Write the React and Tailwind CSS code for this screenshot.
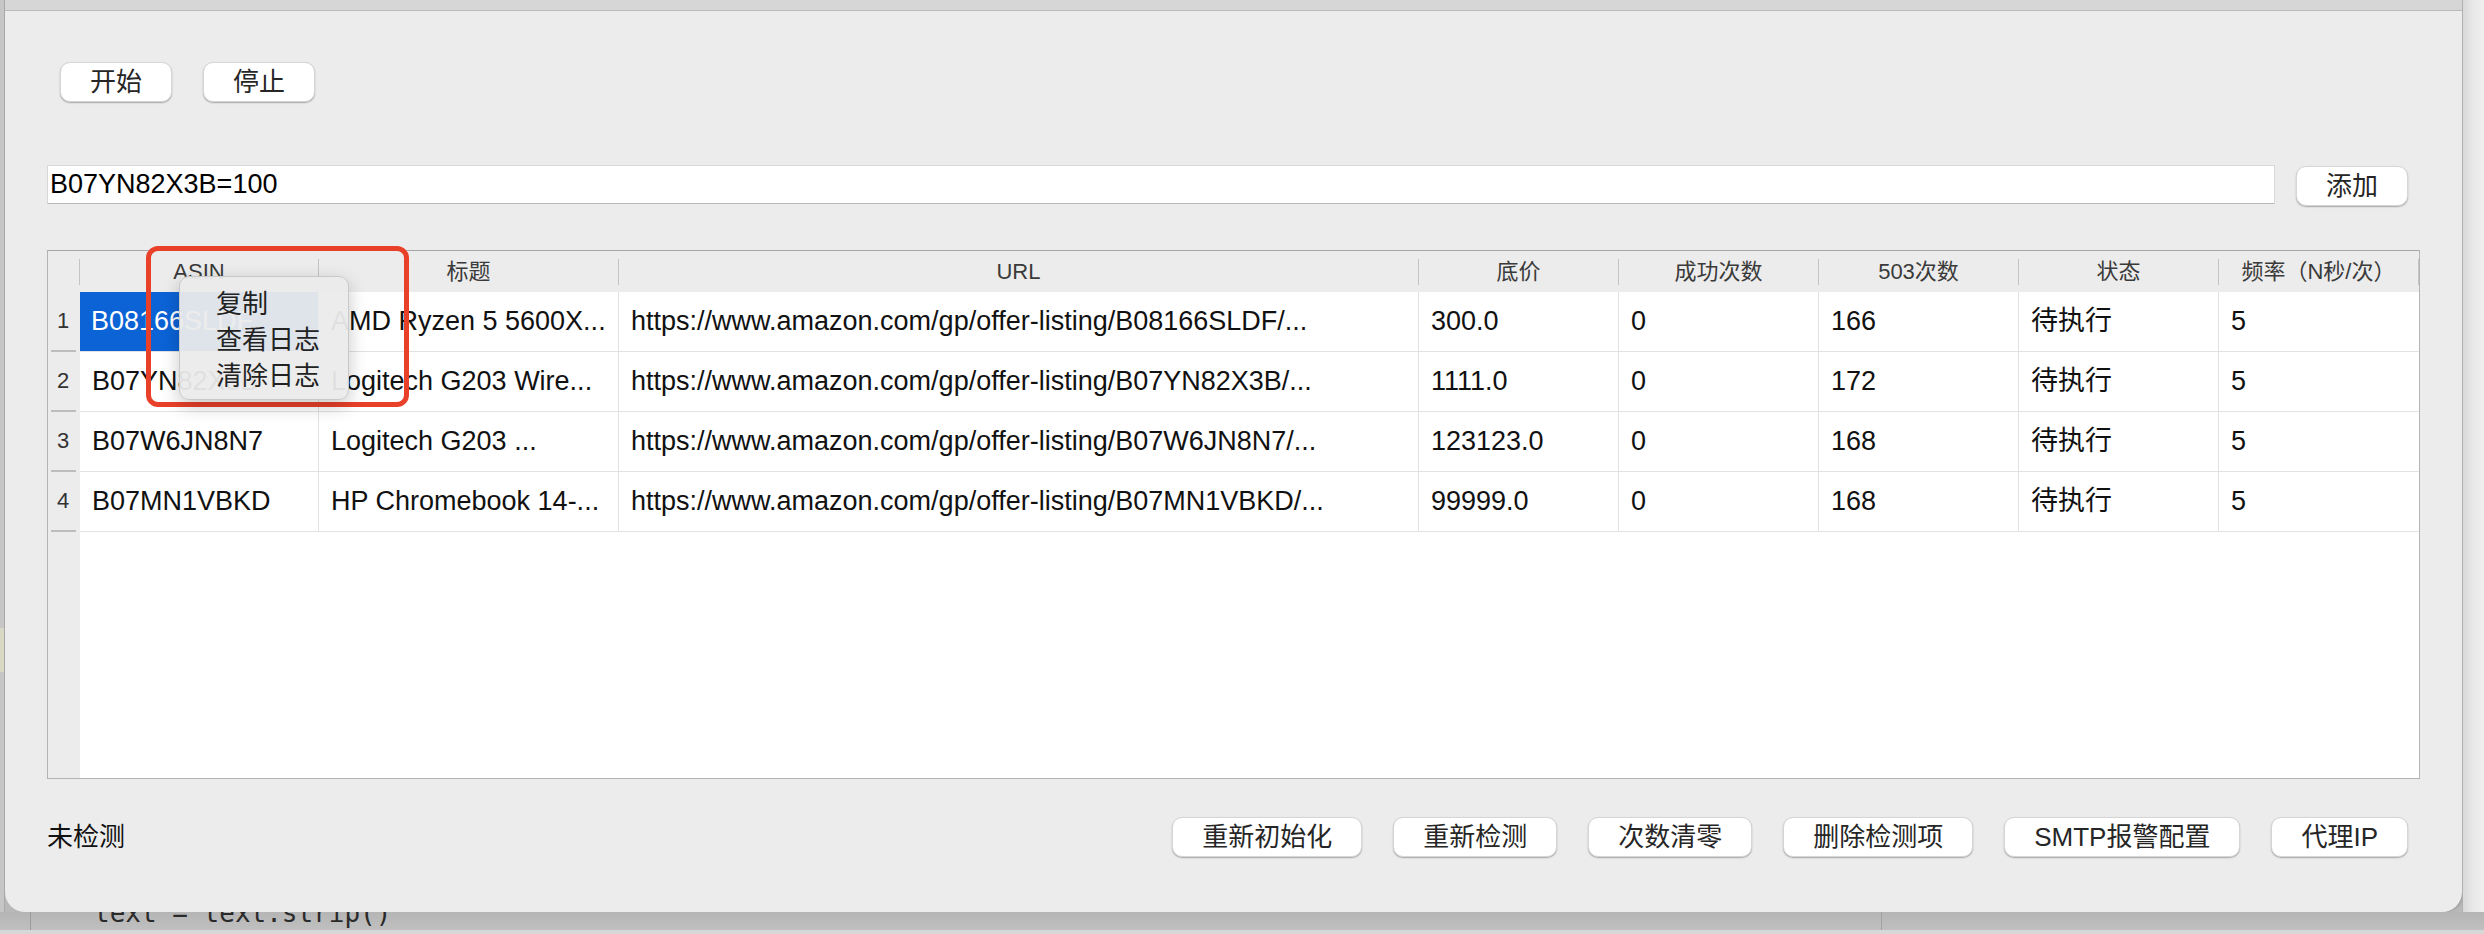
import React from "react";

const COLS = "grid-cols-[32px_239px_300px_800px_200px_200px_200px_200px_200px]";

const headers = ["ASIN", "标题", "URL", "底价", "成功次数", "503次数", "状态", "频率（N秒/次）"];

const rows = [
  ["B08166SLDF", "AMD Ryzen 5 5600X...", "https://www.amazon.com/gp/offer-listing/B08166SLDF/...", "300.0", "0", "166", "待执行", "5"],
  ["B07YN82X3B", "Logitech G203 Wire...", "https://www.amazon.com/gp/offer-listing/B07YN82X3B/...", "1111.0", "0", "172", "待执行", "5"],
  ["B07W6JN8N7", "Logitech G203 ...", "https://www.amazon.com/gp/offer-listing/B07W6JN8N7/...", "123123.0", "0", "168", "待执行", "5"],
  ["B07MN1VBKD", "HP Chromebook 14-...", "https://www.amazon.com/gp/offer-listing/B07MN1VBKD/...", "99999.0", "0", "168", "待执行", "5"],
];

function Btn({ children, className = "" }) {
  return (
    <button
      className={
        "h-[40px] px-[29px] rounded-[10px] bg-white text-[26px] leading-none text-[#262626] border-[0.5px] border-[#d6d6d6] shadow-[0_1px_1.5px_rgba(0,0,0,0.3)] whitespace-nowrap " +
        className
      }
    >
      {children}
    </button>
  );
}

function HeaderCell({ children }) {
  return (
    <div className="flex items-center h-full">
      <div className="flex-1 text-center text-[22px] leading-none text-[#3a3a3a] whitespace-nowrap">{children}</div>
      <div className="w-px h-[26px] bg-[#c4c4c4]" />
    </div>
  );
}

function Table() {
  return (
    <div className="relative mt-[44px] h-[529px] flex flex-col border border-[#b4b4b4] border-t-[#a6a6a6] bg-white">
      {/* header */}
      <div className={"grid h-[41px] bg-[#ececec] " + COLS}>
        <HeaderCell />
        {headers.map((h) => (
          <HeaderCell key={h}>{h}</HeaderCell>
        ))}
      </div>

      {rows.map((r, i) => (
        <div key={i} className={"grid h-[60px] " + COLS}>
          <div className="flex flex-col bg-[#ececec]">
            <div className="flex-1 flex items-center pl-[9px] text-[22px] leading-none text-[#333]">{i + 1}</div>
            <div className="h-[2px] ml-[3px] mr-[4px] bg-[#bdbdbd]" />
          </div>
          {r.map((c, j) => (
            <div
              key={j}
              className={
                "flex items-center pl-3 text-[27px] leading-none whitespace-nowrap overflow-hidden border-b border-[#e2e2e2] " +
                (j < r.length - 1 ? "border-r " : "") +
                (i === 0 && j === 0 ? "bg-[#0b63d6] text-white pl-[11px]" : "text-[#111]")
              }
            >
              {c}
            </div>
          ))}
        </div>
      ))}

      <div className="flex-1 flex">
        <div className="w-[32px] bg-[#ececec]" />
        <div className="flex-1 bg-white" />
      </div>

      {/* red annotation */}
      <div className="absolute left-[98px] top-[-5px] w-[263px] h-[161px] border-[5px] border-[#e9402a] rounded-[12px]" />

      {/* context menu */}
      <div className="absolute left-[131px] top-[25px] w-[170px] h-[124px] rounded-[10px] bg-[#ebebeb]/95 border-[0.5px] border-[#c9c9c9] shadow-[0_6px_18px_rgba(0,0,0,0.22)] pt-[9px] pl-[36px] flex flex-col text-[26px] leading-[36px] text-[#222]">
        <div>复制</div>
        <div>查看日志</div>
        <div>清除日志</div>
      </div>
    </div>
  );
}

export default function App() {
  return (
    <div className="w-[2484px] h-[934px] flex flex-col overflow-hidden bg-[#b9b9b9] font-['Liberation_Sans','Noto_Sans_CJK_SC',sans-serif]">
      <div className="h-[912px] flex">
        {/* left edge of the window behind */}
        <div className="w-[5px] flex flex-col bg-[#c6c6c6] border-r border-[#a9a9a9]">
          <div className="mt-[628px] h-[44px] bg-[#d9d8c4]" />
        </div>

        {/* window */}
        <div className="w-[2457px] flex flex-col bg-[#ececec] rounded-b-[20px] shadow-[2px_0_3px_rgba(0,0,0,0.15)]">
          <div className="h-[11px] bg-[#d6d6d6] border-b border-[#b9b9b9]" />

          <div className="flex flex-col px-[42px]">
            <div className="mt-[51px] ml-[13px] flex gap-[31px]">
              <Btn>开始</Btn>
              <Btn>停止</Btn>
            </div>

            <div className="mt-[63px] mr-[12px] flex items-start gap-[21px]">
              <div className="flex-1 h-[39px] flex items-center pl-[2px] bg-white border border-[#d8d8d8] border-b-[#b8b8b8] text-[27px] leading-none text-black">
                B07YN82X3B=100
              </div>
              <Btn className="mt-[1px]">添加</Btn>
            </div>

            <Table />

            <div className="mt-[38px] mr-[12px] flex items-center justify-between">
              <div className="text-[26px] leading-none text-[#111]">未检测</div>
              <div className="flex gap-[31px]">
                <Btn>重新初始化</Btn>
                <Btn>重新检测</Btn>
                <Btn>次数清零</Btn>
                <Btn>删除检测项</Btn>
                <Btn>SMTP报警配置</Btn>
                <Btn>代理IP</Btn>
              </div>
            </div>
          </div>
        </div>

        {/* right side background */}
        <div className="flex-1 bg-gradient-to-r from-[#d9d9d9] via-[#e9e9e9] to-[#efefef] border-l border-[#b0b0b0]" />
      </div>

      {/* code editor behind the window */}
      <div className="h-[22px] flex flex-col bg-gradient-to-b from-[#b5b5b5] to-[#c2c2c2]">
        <div className="flex-1 flex overflow-hidden">
          <div className="w-[31px] border-r border-[#9c9c9c]" />
          <div className="w-[1851px] border-r border-[#a3a3a3] overflow-hidden">
            <div className="mt-[-12px] ml-[63px] font-['DejaVu_Sans_Mono',monospace] text-[26px] leading-[26px] text-[#2a2a2a] whitespace-pre">
              text = text.strip()
            </div>
          </div>
          <div className="flex-1" />
        </div>
        <div className="h-[4px] bg-[#d7d7d7]" />
      </div>
    </div>
  );
}
